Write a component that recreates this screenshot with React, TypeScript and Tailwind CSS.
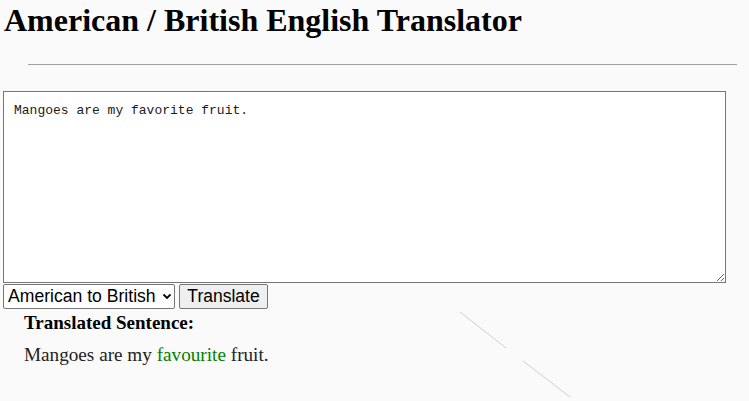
import { useState } from 'react';

const SERIF = { fontFamily: '"Liberation Serif", "Times New Roman", serif' };
const SANS = { fontFamily: '"Liberation Sans", Arial, sans-serif' };

export default function App() {
  const [text, setText] = useState('Mangoes are my favorite fruit.');
  const [locale, setLocale] = useState('american-to-british');

  return (
    <div className="relative min-h-[401px] w-[749px] overflow-hidden bg-[#fafafa] px-[3px] text-black" style={SERIF}>
      <h1 className="pl-[1px] text-[32px] font-bold leading-[40px]">American / British English Translator</h1>

      <hr className="ml-[25px] mr-[9px] mt-[24px] border-t border-[#a0a0a0]" />

      <div className="mt-[26px]">
        <textarea
          value={text}
          onChange={e => setText(e.target.value)}
          className="block h-[192px] w-[723px] border border-[#767676] bg-white px-[10px] pb-[9px] pt-[11px] text-[13px] leading-[16px] text-[#1a1a1a] outline-none"
          style={{ fontFamily: '"Liberation Mono", "DejaVu Sans Mono", monospace' }}
        />
        <div className="mt-[1px] flex items-center gap-[4px]">
          <div className="relative">
            <select
              value={locale}
              onChange={e => setLocale(e.target.value)}
              className="block h-[25px] w-[172px] appearance-none rounded-[2px] border border-[#767676] bg-white pl-[4px] text-[17.6px] leading-[23px] text-black"
              style={SANS}
            >
              <option value="american-to-british">American to British</option>
              <option value="british-to-american">British to American</option>
            </select>
            <svg className="pointer-events-none absolute left-[159px] top-[9px]" width="10" height="7" viewBox="0 0 10 7">
              <path d="M1.5 1.5 L5 5 L8.5 1.5" fill="none" stroke="#000" strokeWidth="1.8" />
            </svg>
          </div>
          <button
            className="h-[25px] w-[89px] rounded-[2px] border border-[#767676] bg-[#efefef] text-[17.5px] leading-[23px] text-black"
            style={SANS}
          >
            Translate
          </button>
        </div>
      </div>

      <div className="pl-[21px]">
        <h3 className="mt-[3px] text-[19px] font-bold leading-[22px]">Translated Sentence:</h3>
        <p className="mt-[9px] text-[19.2px] leading-[24px] text-[#222]">
          Mangoes are my <span className="text-[#008000]">favourite</span> fruit.
        </p>
      </div>

      <svg className="absolute left-[458px] top-[310px]" width="116" height="92" viewBox="0 0 116 92">
        <line x1="2" y1="2" x2="48" y2="38" stroke="#cfcfcf" strokeWidth="1" />
        <line x1="65" y1="51" x2="112" y2="87" stroke="#cfcfcf" strokeWidth="1" />
      </svg>
    </div>
  );
}
